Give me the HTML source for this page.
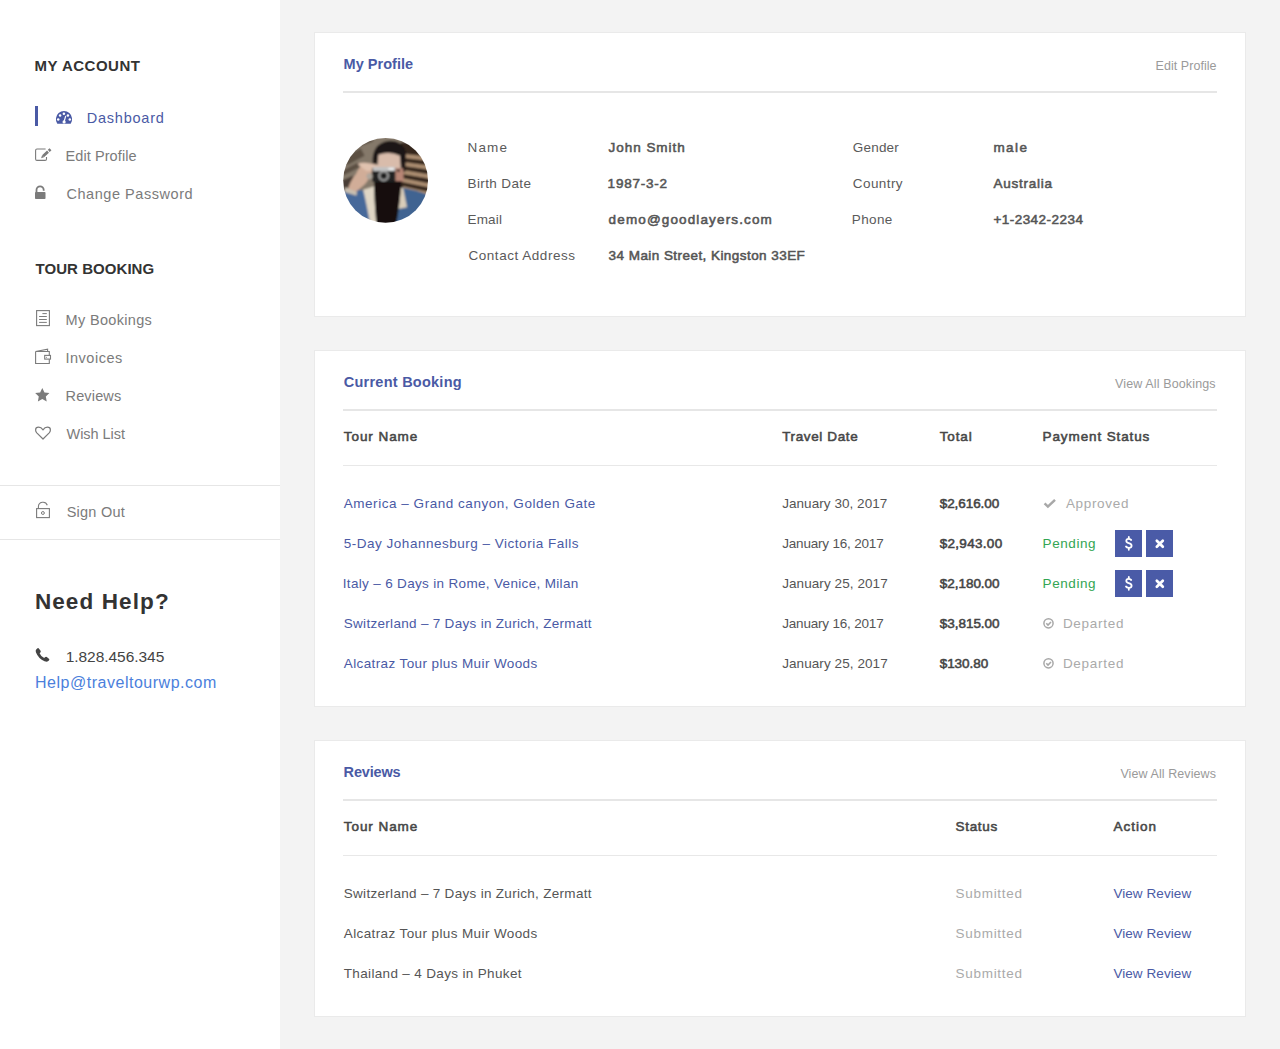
<!DOCTYPE html>
<html><head><meta charset="utf-8"><title>Dashboard</title>
<style>
html,body{margin:0;padding:0;}
body{width:1280px;height:1049px;overflow:hidden;background:#f3f3f3;position:relative;font-family:"Liberation Sans",sans-serif;}
.t{position:absolute;white-space:nowrap;line-height:1;font-family:"Liberation Sans",sans-serif;}

.side{position:absolute;left:0;top:0;width:280px;height:1049px;background:#fff;}
.sep{position:absolute;left:0;width:280px;height:1px;background:#e6e6e6;}
.card{position:absolute;left:314px;width:930px;background:#fff;border:1px solid #eaeaea;}
.hl{position:absolute;left:343px;width:874px;height:2px;background:#e6e6e6;}
.tl{position:absolute;left:343px;width:874px;height:1px;background:#e8e8e8;}
.btn{position:absolute;width:27px;height:27px;background:#4a5ba7;}
.ov{position:absolute;left:0;top:0;width:1280px;height:1049px;}

</style></head><body>

<div class="side"></div>
<div class="sep" style="top:485px"></div>
<div class="sep" style="top:539px"></div>
<div class="card" style="top:32px;height:283px"></div>
<div class="card" style="top:350px;height:355px"></div>
<div class="card" style="top:740px;height:275px"></div>
<div class="hl" style="top:91px"></div>
<div class="hl" style="top:409px"></div>
<div class="hl" style="top:799px"></div>
<div class="tl" style="top:465px"></div>
<div class="tl" style="top:855px"></div>
<div class="btn" style="left:1115px;top:530px"></div>
<div class="btn" style="left:1146px;top:530px"></div>
<div class="btn" style="left:1115px;top:570px"></div>
<div class="btn" style="left:1146px;top:570px"></div>
<svg class="ov" width="1280" height="1049" viewBox="0 0 1280 1049">
  <defs>
    <clipPath id="av"><circle cx="385.6" cy="180.4" r="42.4"/></clipPath>
    <filter id="bl" x="-5%" y="-5%" width="110%" height="110%"><feGaussianBlur stdDeviation="12"/></filter>
  </defs>
  <!-- active bar -->
  <rect x="35" y="106" width="3" height="20" fill="#4a5aa5"/>
  <!-- dashboard icon -->
  <path d="M57.3,123.7 A8.1,8.1 0 1 1 70.7,123.7 Z" fill="#4a5aa5"/>
  <circle cx="58.2" cy="119.5" r="1.25" fill="#fff"/>
  <circle cx="60.1" cy="115.6" r="1.25" fill="#fff"/>
  <circle cx="63.9" cy="113.8" r="1.25" fill="#fff"/>
  <circle cx="67.9" cy="115.6" r="1.25" fill="#fff"/>
  <circle cx="69.8" cy="119.5" r="1.25" fill="#fff"/>
  <path d="M64.1,121.6 L65.6,116.3" stroke="#fff" stroke-width="1.2" stroke-linecap="round"/>
  <circle cx="64.1" cy="121.9" r="1.6" fill="#fff"/>
  <!-- edit icon -->
  <path d="M45.6,149 H37 Q35.6,149 35.6,150.4 V159 Q35.6,160.4 37,160.4 H45.1 Q46.5,160.4 46.5,159 V157" fill="none" stroke="#7b7b7b" stroke-width="1.1"/>
  <path d="M43.0,156.2 L48.0,151.6 M48.75,150.9 L50.5,149.3" stroke="#7b7b7b" stroke-width="2.8"/>
  <path d="M41.1,158.3 L43.95,157.23 L42.05,155.17 Z" fill="#7b7b7b"/>
  <!-- unlock alt -->
  <path d="M36.5,192.5 V190 A3.6,3.6 0 0 1 43.7,190 V190.8" fill="none" stroke="#7b7b7b" stroke-width="1.8"/>
  <rect x="35" y="192" width="10.5" height="7" rx="0.8" fill="#7b7b7b"/>
  <!-- my bookings doc -->
  <rect x="36.6" y="310.6" width="12.8" height="15" fill="none" stroke="#7b7b7b" stroke-width="1.1"/>
  <path d="M42.4,313.6 H46.8 M39.1,316.5 H46.8 M39.1,319.5 H46.8 M39.1,322.4 H46.8" stroke="#7b7b7b" stroke-width="1"/>
  <!-- invoices wallet -->
  <path d="M35.6,351.5 V363.5 H49.3 V351.5 H35.6 M35.6,351.5 L47.6,349.1 V351.5" fill="none" stroke="#7b7b7b" stroke-width="1.1"/>
  <rect x="44.7" y="355.4" width="5.8" height="3.7" fill="#fff" stroke="#7b7b7b" stroke-width="1.1"/>
  <circle cx="46.4" cy="357.2" r="0.55" fill="#7b7b7b"/>
  <!-- star -->
  <path d="M42.30,387.90 L44.47,392.41 L49.43,393.08 L45.82,396.54 L46.71,401.47 L42.30,399.10 L37.89,401.47 L38.78,396.54 L35.17,393.08 L40.13,392.41 Z" fill="#7b7b7b"/>
  <!-- heart -->
  <path d="M43,439 L36.8,432.8 Q35.6,431.5 35.6,429.9 Q35.6,427.2 38.6,427.2 Q41.2,427.2 43,429.9 Q44.8,427.2 47.4,427.2 Q50.4,427.2 50.4,429.9 Q50.4,431.5 49.2,432.8 Z" fill="none" stroke="#7b7b7b" stroke-width="1.2" stroke-linejoin="round"/>
  <!-- sign out lock -->
  <rect x="36.6" y="508.6" width="12.8" height="9" fill="none" stroke="#7b7b7b" stroke-width="1.1"/>
  <path d="M38.4,508.4 V506.8 A4.6,4.6 0 0 1 47.3,505.2" fill="none" stroke="#7b7b7b" stroke-width="1.1"/>
  <circle cx="42.9" cy="513" r="1.45" fill="none" stroke="#7b7b7b" stroke-width="1"/>
  <!-- phone -->
  <path d="M38.6,648.3 L40.6,650.8 Q41.2,651.8 40.2,652.7 L39.6,653.3 Q40.9,656.6 44.2,658 L44.9,657.3 Q45.8,656.4 46.8,657 L49.2,659 Q49.6,659.7 48.9,660.5 L47.9,661.3 Q46.9,662.1 44.5,661.2 Q38.5,658.8 36,652.5 Q35.2,650.4 36.2,649.4 L37.2,648.5 Q38,647.8 38.6,648.3 Z" fill="#444"/>
  <!-- approved check -->
  <path d="M1044.6,503.4 L1047.9,506.6 L1055,499.8" fill="none" stroke="#a8a8a8" stroke-width="2.5"/>
  <!-- departed circle checks -->
  <circle cx="1048.5" cy="623.3" r="4.6" fill="none" stroke="#a8a8a8" stroke-width="1.5"/>
  <path d="M1046.3,623.3 L1048,625 L1051,622" fill="none" stroke="#a8a8a8" stroke-width="1.6"/>
  <circle cx="1048.5" cy="663.3" r="4.6" fill="none" stroke="#a8a8a8" stroke-width="1.5"/>
  <path d="M1046.3,663.3 L1048,665 L1051,662" fill="none" stroke="#a8a8a8" stroke-width="1.6"/>
  <!-- button glyphs -->
  <g fill="none" stroke="#fff" stroke-width="1.8" stroke-linecap="round">
    <path d="M1131.2,540 Q1130.6,538.8 1128.6,538.8 Q1126.3,538.8 1126.3,540.8 Q1126.3,542.6 1128.7,543.1 Q1131.6,543.7 1131.6,545.7 Q1131.6,547.8 1128.8,547.8 Q1126.6,547.8 1126,546.5"/>
    <path d="M1128.8,537 V538.6 M1128.8,548 V549.8"/>
    <path d="M1156.8,540.7 L1162.8,546.7 M1162.8,540.7 L1156.8,546.7" stroke-width="2.7"/>
    <path d="M1131.2,580 Q1130.6,578.8 1128.6,578.8 Q1126.3,578.8 1126.3,580.8 Q1126.3,582.6 1128.7,583.1 Q1131.6,583.7 1131.6,585.7 Q1131.6,587.8 1128.8,587.8 Q1126.6,587.8 1126,586.5"/>
    <path d="M1128.8,577 V578.6 M1128.8,588 V589.8"/>
    <path d="M1156.8,580.7 L1162.8,586.7 M1162.8,580.7 L1156.8,586.7" stroke-width="2.7"/>
  </g>
  <!-- avatar -->
  <g clip-path="url(#av)">
   <g transform="translate(336,131) scale(0.09533)" filter="url(#bl)">
    <rect x="0" y="0" width="1049" height="1049" fill="#85796b"/>
    <path d="M60,280 L260,180 L300,260 L120,360 Z M60,420 L230,330 L250,380 L70,470 Z M200,120 L380,60 L390,110 L220,170 Z" fill="#5b4f43"/>
    <path d="M60,520 L180,470 L200,600 L60,640 Z" fill="#4a3e34"/>
    <path d="M680,120 L1049,120 L1049,760 L680,760 Z" fill="#35271d"/>
    <path d="M700,260 L1049,300 M700,345 L1049,395 M700,430 L1049,490 M700,515 L1049,585 M700,600 L1049,680" stroke="#ad8f72" stroke-width="42"/>
    <path d="M385,340 Q370,140 540,105 Q700,90 735,230 L725,430 L680,430 L670,260 Q560,205 445,250 L430,345 Z" fill="#1a1512"/>
    <path d="M445,250 Q560,205 670,260 L680,395 L440,395 Z" fill="#d9bcab"/>
    <path d="M615,390 L705,390 L710,530 L620,530 Z" fill="#b98676"/>
    <circle cx="655" cy="415" r="16" fill="#3a2a25"/>
    <path d="M80,640 Q220,590 330,640 L370,1049 L0,1049 L0,700 Z" fill="#46699a"/>
    <path d="M650,590 Q830,610 1049,700 L1049,1049 L600,1049 Z" fill="#3f6391"/>
    <path d="M285,615 L420,575 L450,1049 L370,1049 Q330,800 285,615 Z" fill="#e0d6c5"/>
    <path d="M610,585 L705,600 L745,800 L640,820 Z" fill="#d9cdb9"/>
    <path d="M398,525 L685,525 Q680,720 620,1049 L430,1049 Q398,720 398,525 Z" fill="#121010"/>
    <path d="M120,625 Q150,520 210,450 Q240,380 290,340 L440,360 L445,405 L380,415 Q350,510 300,560 Q240,610 190,655 Z" fill="#d1ad98"/>
    <path d="M225,345 Q300,315 440,360 L442,410 L320,420 Z" fill="#e0c2af"/>
    <path d="M95,590 L220,640 L215,680 L90,640 Z" fill="#c9bfb0"/>
    <rect x="378" y="388" width="245" height="145" rx="8" fill="#242424"/>
    <rect x="388" y="378" width="232" height="42" rx="5" fill="#c2c2c2"/>
    <rect x="550" y="386" width="58" height="24" fill="#f0f0f0"/>
    <circle cx="500" cy="470" r="56" fill="#a8a8a8"/>
    <circle cx="500" cy="470" r="38" fill="#3a3a3a"/>
    <circle cx="500" cy="470" r="20" fill="#0d0d0d"/>
    <circle cx="352" cy="475" r="32" fill="#aea69c"/>
   </g>
  </g>
</svg>

<span class="t" style="left:34.60px;top:58.00px;font-size:15px;color:#333333;letter-spacing:0.500px;font-weight:bold">MY ACCOUNT</span>
<span class="t" style="left:86.75px;top:111.00px;font-size:14.5px;color:#4a5aa5;letter-spacing:0.766px">Dashboard</span>
<span class="t" style="left:65.50px;top:149.00px;font-size:14.5px;color:#7b7b7b;letter-spacing:0.086px">Edit Profile</span>
<span class="t" style="left:66.50px;top:187.00px;font-size:14.5px;color:#7b7b7b;letter-spacing:0.541px">Change Password</span>
<span class="t" style="left:35.50px;top:261.00px;font-size:15px;color:#333333;letter-spacing:0.055px;font-weight:bold">TOUR BOOKING</span>
<span class="t" style="left:65.60px;top:313.00px;font-size:14.5px;color:#7b7b7b;letter-spacing:0.324px">My Bookings</span>
<span class="t" style="left:65.50px;top:351.00px;font-size:14.5px;color:#7b7b7b;letter-spacing:0.508px">Invoices</span>
<span class="t" style="left:65.50px;top:389.00px;font-size:14.5px;color:#7b7b7b;letter-spacing:0.160px">Reviews</span>
<span class="t" style="left:66.50px;top:427.00px;font-size:14.5px;color:#7b7b7b;letter-spacing:-0.048px">Wish List</span>
<span class="t" style="left:66.70px;top:505.00px;font-size:14.5px;color:#7b7b7b;letter-spacing:0.230px">Sign Out</span>
<span class="t" style="left:34.90px;top:591.00px;font-size:22.5px;color:#333333;letter-spacing:1.108px;font-weight:bold">Need Help?</span>
<span class="t" style="left:65.70px;top:649.00px;font-size:15.5px;color:#444444;letter-spacing:-0.042px">1.828.456.345</span>
<span class="t" style="left:35.00px;top:675.00px;font-size:16px;color:#4b7fdc;letter-spacing:0.518px">Help@traveltourwp.com</span>
<span class="t" style="left:343.60px;top:57.00px;font-size:14.5px;color:#4a5aa5;letter-spacing:0.019px;font-weight:bold">My Profile</span>
<span class="t" style="left:1155.60px;top:60.00px;font-size:12.5px;color:#9a9a9a;letter-spacing:0.046px">Edit Profile</span>
<span class="t" style="left:467.50px;top:141.00px;font-size:13.5px;color:#5a5a5a;letter-spacing:1.166px">Name</span>
<span class="t" style="left:608.60px;top:141.00px;font-size:13.5px;color:#555555;letter-spacing:0.953px;-webkit-text-stroke:0.55px #555555">John Smith</span>
<span class="t" style="left:467.50px;top:177.00px;font-size:13.5px;color:#5a5a5a;letter-spacing:0.387px">Birth Date</span>
<span class="t" style="left:607.60px;top:177.00px;font-size:13.5px;color:#555555;letter-spacing:0.781px;-webkit-text-stroke:0.55px #555555">1987-3-2</span>
<span class="t" style="left:467.50px;top:213.00px;font-size:13.5px;color:#5a5a5a;letter-spacing:0.186px">Email</span>
<span class="t" style="left:608.60px;top:213.00px;font-size:13.5px;color:#555555;letter-spacing:1.137px;-webkit-text-stroke:0.55px #555555">demo@goodlayers.com</span>
<span class="t" style="left:468.50px;top:249.00px;font-size:13.5px;color:#5a5a5a;letter-spacing:0.532px">Contact Address</span>
<span class="t" style="left:608.60px;top:249.00px;font-size:13.5px;color:#555555;letter-spacing:0.443px;-webkit-text-stroke:0.55px #555555">34 Main Street, Kingston 33EF</span>
<span class="t" style="left:852.80px;top:141.00px;font-size:13.5px;color:#5a5a5a;letter-spacing:0.193px">Gender</span>
<span class="t" style="left:993.40px;top:141.00px;font-size:13.5px;color:#555555;letter-spacing:1.416px;-webkit-text-stroke:0.55px #555555">male</span>
<span class="t" style="left:852.80px;top:177.00px;font-size:13.5px;color:#5a5a5a;letter-spacing:0.413px">Country</span>
<span class="t" style="left:993.40px;top:177.00px;font-size:13.5px;color:#555555;letter-spacing:0.748px;-webkit-text-stroke:0.55px #555555">Australia</span>
<span class="t" style="left:851.80px;top:213.00px;font-size:13.5px;color:#5a5a5a;letter-spacing:0.368px">Phone</span>
<span class="t" style="left:993.40px;top:213.00px;font-size:13.5px;color:#555555;letter-spacing:0.460px;-webkit-text-stroke:0.55px #555555">+1-2342-2234</span>
<span class="t" style="left:343.75px;top:375.00px;font-size:14.5px;color:#4a5aa5;letter-spacing:0.248px;font-weight:bold">Current Booking</span>
<span class="t" style="left:1115.00px;top:378.00px;font-size:12.5px;color:#9a9a9a;letter-spacing:0.133px">View All Bookings</span>
<span class="t" style="left:343.75px;top:430.00px;font-size:13.5px;color:#474747;letter-spacing:0.936px;-webkit-text-stroke:0.55px #474747">Tour Name</span>
<span class="t" style="left:782.20px;top:430.00px;font-size:13.5px;color:#474747;letter-spacing:0.623px;-webkit-text-stroke:0.55px #474747">Travel Date</span>
<span class="t" style="left:939.70px;top:430.00px;font-size:13.5px;color:#474747;letter-spacing:0.871px;-webkit-text-stroke:0.55px #474747">Total</span>
<span class="t" style="left:1042.60px;top:430.00px;font-size:13.5px;color:#474747;letter-spacing:0.881px;-webkit-text-stroke:0.55px #474747">Payment Status</span>
<span class="t" style="left:343.75px;top:497.00px;font-size:13.5px;color:#4a5aa5;letter-spacing:0.533px">America – Grand canyon, Golden Gate</span>
<span class="t" style="left:782.20px;top:497.00px;font-size:13.5px;color:#555555;letter-spacing:0.052px">January 30, 2017</span>
<span class="t" style="left:939.70px;top:497.00px;font-size:13.5px;color:#444444;letter-spacing:-0.069px;-webkit-text-stroke:0.55px #444444">$2,616.00</span>
<span class="t" style="left:343.75px;top:537.00px;font-size:13.5px;color:#4a5aa5;letter-spacing:0.511px">5-Day Johannesburg – Victoria Falls</span>
<span class="t" style="left:782.20px;top:537.00px;font-size:13.5px;color:#555555;letter-spacing:-0.188px">January 16, 2017</span>
<span class="t" style="left:939.70px;top:537.00px;font-size:13.5px;color:#444444;letter-spacing:0.306px;-webkit-text-stroke:0.55px #444444">$2,943.00</span>
<span class="t" style="left:342.75px;top:577.00px;font-size:13.5px;color:#4a5aa5;letter-spacing:0.331px">Italy – 6 Days in Rome, Venice, Milan</span>
<span class="t" style="left:782.20px;top:577.00px;font-size:13.5px;color:#555555;letter-spacing:0.079px">January 25, 2017</span>
<span class="t" style="left:939.70px;top:577.00px;font-size:13.5px;color:#444444;letter-spacing:-0.019px;-webkit-text-stroke:0.55px #444444">$2,180.00</span>
<span class="t" style="left:343.75px;top:617.00px;font-size:13.5px;color:#4a5aa5;letter-spacing:0.301px">Switzerland – 7 Days in Zurich, Zermatt</span>
<span class="t" style="left:782.20px;top:617.00px;font-size:13.5px;color:#555555;letter-spacing:-0.188px">January 16, 2017</span>
<span class="t" style="left:939.70px;top:617.00px;font-size:13.5px;color:#444444;letter-spacing:-0.019px;-webkit-text-stroke:0.55px #444444">$3,815.00</span>
<span class="t" style="left:343.75px;top:657.00px;font-size:13.5px;color:#4a5aa5;letter-spacing:0.390px">Alcatraz Tour plus Muir Woods</span>
<span class="t" style="left:782.20px;top:657.00px;font-size:13.5px;color:#555555;letter-spacing:0.079px">January 25, 2017</span>
<span class="t" style="left:939.70px;top:657.00px;font-size:13.5px;color:#444444;letter-spacing:-0.049px;-webkit-text-stroke:0.55px #444444">$130.80</span>
<span class="t" style="left:1065.90px;top:497.00px;font-size:13.5px;color:#aaaaaa;letter-spacing:0.674px">Approved</span>
<span class="t" style="left:1042.60px;top:537.00px;font-size:13.5px;color:#32a552;letter-spacing:0.577px">Pending</span>
<span class="t" style="left:1042.60px;top:577.00px;font-size:13.5px;color:#32a552;letter-spacing:0.577px">Pending</span>
<span class="t" style="left:1062.90px;top:617.00px;font-size:13.5px;color:#aaaaaa;letter-spacing:0.710px">Departed</span>
<span class="t" style="left:1062.90px;top:657.00px;font-size:13.5px;color:#aaaaaa;letter-spacing:0.710px">Departed</span>
<span class="t" style="left:343.60px;top:765.00px;font-size:14.5px;color:#4a5aa5;letter-spacing:-0.162px;font-weight:bold">Reviews</span>
<span class="t" style="left:1120.40px;top:768.00px;font-size:12.5px;color:#9a9a9a;letter-spacing:0.087px">View All Reviews</span>
<span class="t" style="left:343.75px;top:820.00px;font-size:13.5px;color:#474747;letter-spacing:0.936px;-webkit-text-stroke:0.55px #474747">Tour Name</span>
<span class="t" style="left:955.50px;top:820.00px;font-size:13.5px;color:#474747;letter-spacing:0.696px;-webkit-text-stroke:0.55px #474747">Status</span>
<span class="t" style="left:1113.40px;top:820.00px;font-size:13.5px;color:#474747;letter-spacing:0.998px;-webkit-text-stroke:0.55px #474747">Action</span>
<span class="t" style="left:343.75px;top:887.00px;font-size:13.5px;color:#555555;letter-spacing:0.301px">Switzerland – 7 Days in Zurich, Zermatt</span>
<span class="t" style="left:955.50px;top:887.00px;font-size:13.5px;color:#aaaaaa;letter-spacing:0.716px">Submitted</span>
<span class="t" style="left:1113.40px;top:887.00px;font-size:13.5px;color:#4a5aa5;letter-spacing:0.072px">View Review</span>
<span class="t" style="left:343.75px;top:927.00px;font-size:13.5px;color:#555555;letter-spacing:0.390px">Alcatraz Tour plus Muir Woods</span>
<span class="t" style="left:955.50px;top:927.00px;font-size:13.5px;color:#aaaaaa;letter-spacing:0.716px">Submitted</span>
<span class="t" style="left:1113.40px;top:927.00px;font-size:13.5px;color:#4a5aa5;letter-spacing:0.072px">View Review</span>
<span class="t" style="left:343.75px;top:967.00px;font-size:13.5px;color:#555555;letter-spacing:0.342px">Thailand – 4 Days in Phuket</span>
<span class="t" style="left:955.50px;top:967.00px;font-size:13.5px;color:#aaaaaa;letter-spacing:0.716px">Submitted</span>
<span class="t" style="left:1113.40px;top:967.00px;font-size:13.5px;color:#4a5aa5;letter-spacing:0.072px">View Review</span>
</body></html>
